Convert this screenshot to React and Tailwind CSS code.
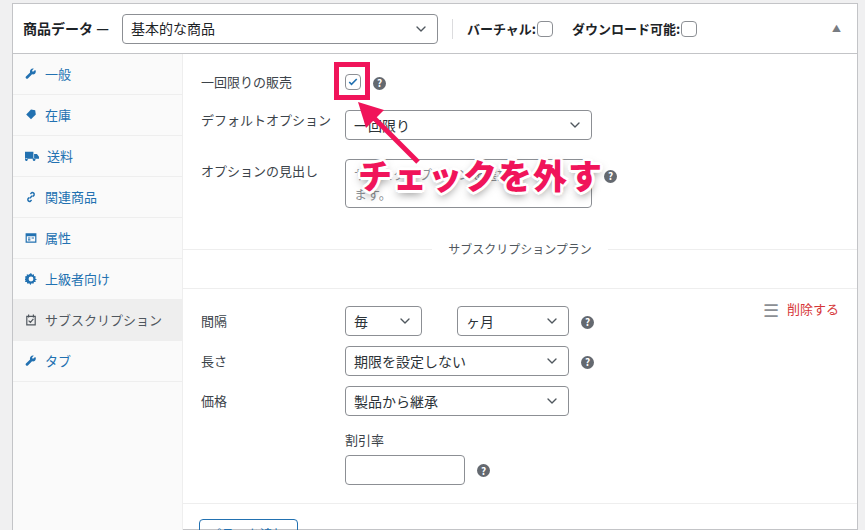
import { ChevronDown } from "lucide-react";

const font = { fontFamily: '"Noto Sans CJK JP", "Noto Sans", sans-serif' };

function Help() {
  return (
    <span className="inline-flex h-[13px] w-[13px] items-center justify-center rounded-full bg-[#646970] text-[10px] font-bold leading-none text-white">?</span>
  );
}

function Select({ value, w }) {
  return (
    <div className={`flex h-[30px] ${w} items-center justify-between rounded border border-[#8c8f94] bg-white pl-2 pr-2 text-[14px] text-[#2c3338]`}>
      <span>{value}</span>
      <ChevronDown className="h-4 w-4 text-[#50575e]" strokeWidth={2} />
    </div>
  );
}

const Wrench = () => (
  <svg viewBox="0 0 20 20" className="h-3 w-3 fill-current"><path d="M16.7 3.3l-2.6 2.6-2-.1-.1-2L14.6 1.2C12.8.6 10.9 1 9.6 2.4 8.3 3.7 7.9 5.6 8.5 7.3L1.6 14.2c-.8.8-.8 2 0 2.8l.4.4c.8.8 2 .8 2.8 0l6.9-6.9c1.7.6 3.6.2 4.9-1.1 1.4-1.4 1.8-3.3 1.1-5.1z" /></svg>
);

const items = [
  { label: "一般", icon: <Wrench /> },
  { label: "在庫", icon: <svg viewBox="0 0 20 20" className="h-3 w-3 fill-current"><path d="M2 9l8-8 7 1 1 7-8 8z" /></svg> },
  { label: "送料", icon: <svg viewBox="0 0 20 14" className="h-3 w-3.5 fill-current"><path d="M0 1h12v10H0zM13 4h4l3 4v3h-7zM4 12a2 2 0 100 .1zM15 12a2 2 0 100 .1z" /></svg> },
  { label: "関連商品", icon: <svg viewBox="0 0 20 20" className="h-3 w-3 fill-none stroke-current" strokeWidth="2.5"><path d="M8 12l4-4M9 5l2-2a3 3 0 014 4l-2 2M11 15l-2 2a3 3 0 01-4-4l2-2" /></svg> },
  { label: "属性", icon: <svg viewBox="0 0 20 20" className="h-3 w-3 fill-current"><path d="M1 2h18v16H1zM3 7v9h14V7zM5 9h4v2H5zM11 9h4v2h-4zM5 12h4v2H5z" /></svg> },
  { label: "上級者向け", icon: <svg viewBox="0 0 20 20" className="h-3 w-3 fill-current"><path d="M10 0l2 3 3-1 0 3 3 1-1 3 3 2-3 1 1 3-3 0-1 3-3-1-2 3-2-3-3 1-1-3-3 0 1-3-3-1 3-2-1-3 3-1 0-3 3 1zM10 6a4 4 0 100 8 4 4 0 000-8z" /></svg> },
  { label: "サブスクリプション", active: true, icon: <svg viewBox="0 0 20 20" className="h-3 w-3 fill-none stroke-current" strokeWidth="2"><path d="M3 4h14v14H3zM6 1v5M14 1v5M6 11l3 3 5-6" /></svg> },
  { label: "タブ", icon: <Wrench /> },
];

export default function App() {
  return (
    <div className="relative h-[530px] w-[865px] overflow-hidden bg-[#f0f0f1] pl-3 pr-[7px] pt-[3px]" style={font}>
      <div className="h-full border border-[#c3c4c7] bg-white">
        <div className="flex h-[50px] items-center border-b border-[#c3c4c7] pl-[10px] pr-4 text-[14px] font-bold text-[#1d2327]">
          <span>商品データ —</span>
          <div className="ml-[13px] flex h-[30px] w-[316px] items-center justify-between rounded border border-[#8c8f94] px-2 font-normal">
            <span>基本的な商品</span>
            <ChevronDown className="h-4 w-4 text-[#50575e]" />
          </div>
          <span className="mx-[14px] h-5 w-px bg-[#dcdcde]" />
          <span className="text-[13px]">バーチャル:</span>
          <span className="ml-px h-4 w-4 rounded border border-[#8c8f94]" />
          <span className="ml-[19px] text-[13px]">ダウンロード可能:</span>
          <span className="ml-px h-4 w-4 rounded border border-[#8c8f94]" />
          <span className="ml-auto text-[9px] text-[#787c82]">▲</span>
        </div>
        <div className="flex h-full">
          <div className="w-[170px] shrink-0 border-r border-[#eee] bg-[#fafafa]">
            {items.map((it) => (
              <div key={it.label} className={`flex h-[41px] items-center gap-2 border-b border-[#eee] pl-[12px] text-[13px] ${it.active ? "bg-[#eee] text-[#50575e]" : "text-[#2271b1]"}`}>
                {it.icon}
                <span>{it.label}</span>
              </div>
            ))}
          </div>
          <div className="flex-1 text-[13px] text-[#3c434a]">
            <div className="flex h-[56px] items-center pl-[18px]">
              <span className="w-[144px]">一回限りの販売</span>
              <span className="flex h-4 w-4 items-center justify-center rounded border border-[#8c8f94] text-[#2271b1]">
                <svg viewBox="0 0 16 16" className="h-3 w-3"><path d="M3 8l3 3 7-7" fill="none" stroke="currentColor" strokeWidth="2.2" /></svg>
              </span>
              <span className="ml-[12px]"><Help /></span>
            </div>
            <div className="flex h-[30px] items-center pl-[18px]">
              <span className="w-[144px] self-start">デフォルトオプション</span>
              <Select value="一回限り" w="w-[247px]" />
            </div>
            <div className="mt-[19px] flex items-start pl-[18px]">
              <span className="w-[144px] pt-[2px]">オプションの見出し</span>
              <div className="h-[49px] w-[247px] rounded border border-[#8c8f94] px-2 pt-1 text-[13px] leading-5 text-[#8c8f94]">サブスクリプションを選択し<br />ます。</div>
              <span className="ml-[12px] mt-[6px]"><Help /></span>
            </div>
            <div className="mt-[32px] flex items-center">
              <div className="h-px flex-1 bg-[#eee]" />
              <span className="px-4 text-[12px] text-[#50575e]">サブスクリプションプラン</span>
              <div className="h-px flex-1 bg-[#eee]" />
            </div>
            <div className="mt-[30px] border-t border-[#eee] pb-[18px]">
              <div className="relative">
                <div className="absolute right-[18px] top-[10px] flex items-center gap-2 text-[13px] text-[#d63638]">
                  <span className="text-[18px] leading-none text-[#8c8f94]">☰</span>
                  <span>削除する</span>
                </div>
              </div>
              <div className="flex items-center pl-[18px] pt-[17px]">
                <span className="w-[144px]">間隔</span>
                <Select value="毎" w="w-[77px]" />
                <span className="ml-[35px]" />
                <Select value="ヶ月" w="w-[112px]" />
                <span className="ml-[12px]"><Help /></span>
              </div>
              <div className="mt-[10px] flex items-center pl-[18px]">
                <span className="w-[144px]">長さ</span>
                <Select value="期限を設定しない" w="w-[224px]" />
                <span className="ml-[12px]"><Help /></span>
              </div>
              <div className="mt-[10px] flex items-center pl-[18px]">
                <span className="w-[144px]">価格</span>
                <Select value="製品から継承" w="w-[224px]" />
              </div>
              <div className="mt-[14px] pl-[162px]">割引率</div>
              <div className="mt-[5px] flex items-center pl-[162px]">
                <div className="h-[30px] w-[120px] rounded border border-[#8c8f94]" />
                <span className="ml-[12px]"><Help /></span>
              </div>
            </div>
            <div className="border-t border-[#eee] pl-[16px] pt-[15px]">
              <div className="h-[30px] w-[99px] rounded border border-[#2271b1] px-2 pt-1 text-[13px] text-[#2271b1]">プランを追加</div>
            </div>
          </div>
        </div>
      </div>

      {/* annotation overlay */}
      <div className="absolute left-[334px] top-[62px] h-[38px] w-[36px] border-[5px] border-[#f0145a]" />
      <svg className="absolute left-0 top-0" width="865" height="530">
        <line x1="418" y1="162" x2="368" y2="112" stroke="#f0145a" strokeWidth="5" />
        <polygon points="358,102 384,110 366,128" fill="#f0145a" />
      </svg>
      <div
        className="absolute left-[358px] top-[158px] text-[34px] font-black leading-none tracking-[1px] text-[#f0145a]"
        style={{ textShadow: "2px 2px 0 #fff,-2px -2px 0 #fff,2px -2px 0 #fff,-2px 2px 0 #fff,0 3px 0 #fff,0 -3px 0 #fff,3px 0 0 #fff,-3px 0 0 #fff,0 4px 8px rgba(0,0,0,.5)" }}
      >
        チェックを外す
      </div>
    </div>
  );
}
